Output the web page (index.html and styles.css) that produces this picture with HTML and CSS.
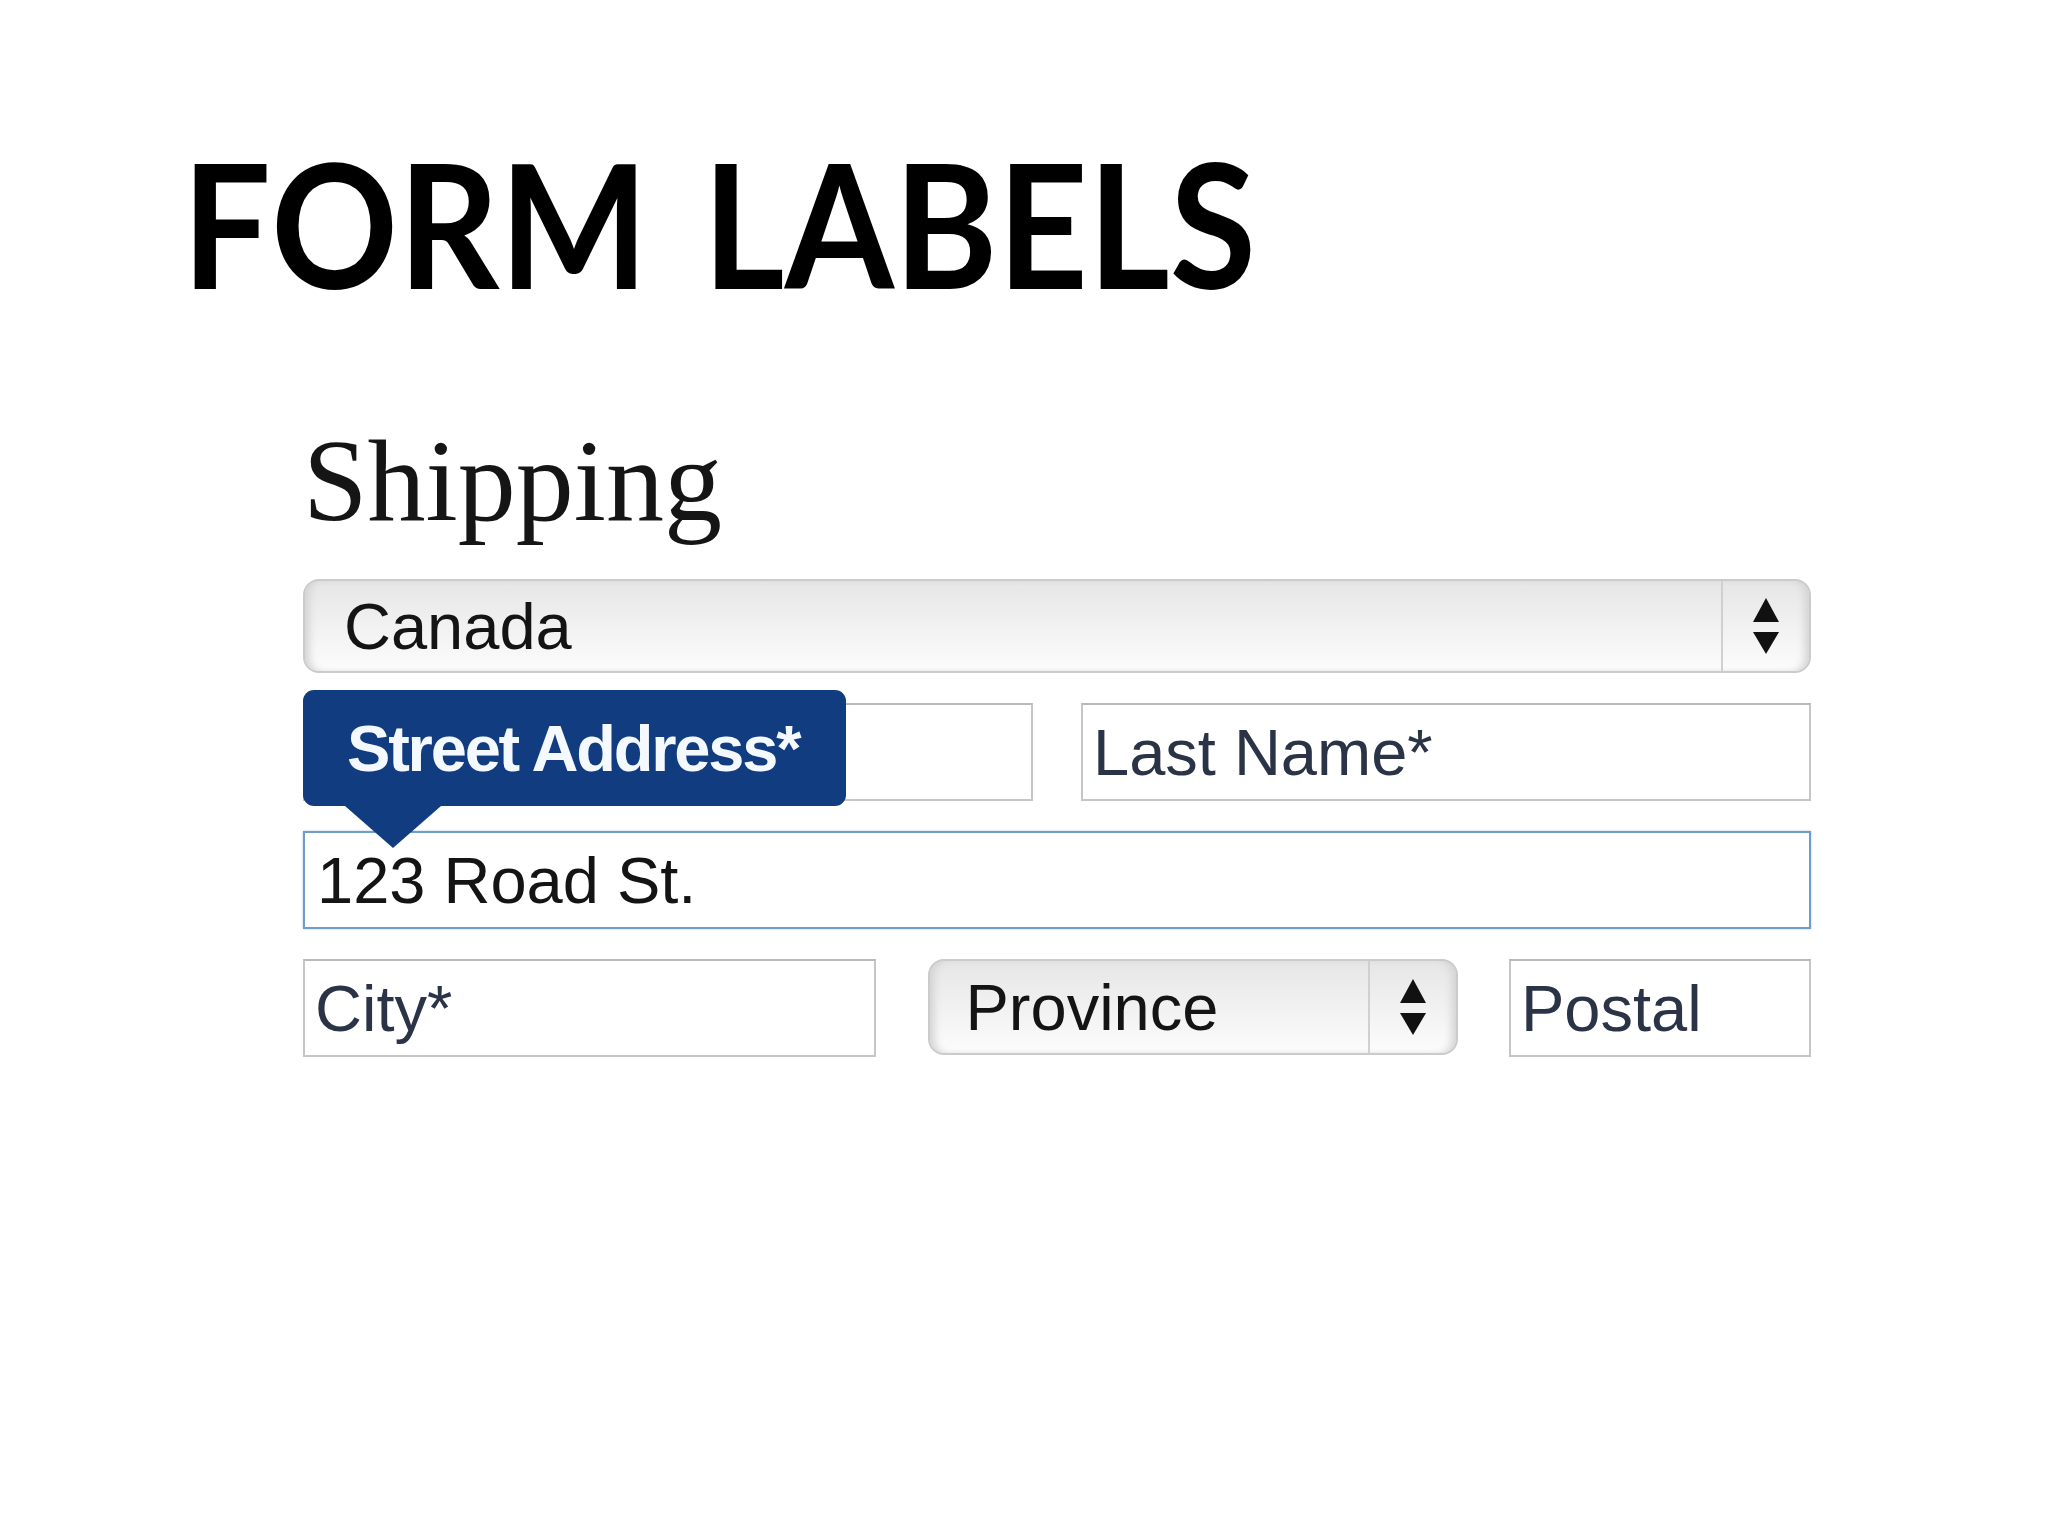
FILE: index.html
```html
<!DOCTYPE html>
<html lang="en">
<head>
    <meta charset="UTF-8">
    <meta name="viewport" content="width=device-width, initial-scale=1.0">
    <title>Form Labels</title>
    <link rel="stylesheet" href="styles.css">
</head>
<body>

    <div class="slide">
        <h1 class="slide-title">FORM LABELS</h1>

        <h2 class="shipping-title">Shipping</h2>

        <form class="shipping-form" id="shippingForm">
            <div class="select">
                <span class="select-value">Canada</span>
                <span class="select-arrows">
                    <svg width="26" height="56" viewBox="0 0 26 56">
                        <polygon points="13,0 26,24 0,24" />
                        <polygon points="0,34 26,34 13,56" />
                    </svg>
                </span>
            </div>

            <div class="row">
                <div class="field-wrap">
                    <input type="text" class="field field-half" name="firstName">
                    <div class="tip">Street Address*</div>
                </div>
                <input type="text" class="field field-half" name="lastName" placeholder="Last Name*">
            </div>

            <input type="text" class="field field-focus" name="street" value="123 Road St.">

            <div class="row">
                <input type="text" class="field field-city" name="city" placeholder="City*">
                <div class="select select-province">
                    <span class="select-value">Province</span>
                    <span class="select-arrows">
                        <svg width="26" height="56" viewBox="0 0 26 56">
                            <polygon points="13,0 26,24 0,24" />
                            <polygon points="0,34 26,34 13,56" />
                        </svg>
                    </span>
                </div>
                <input type="text" class="field field-postal" name="postal" placeholder="Postal">
            </div>
        </form>
    </div>

</body>
</html>
```

FILE: styles.css
```css
* {
    box-sizing: border-box;
}
body {
    margin: 0;
    background-color: #fff;
    font-family: "Liberation Sans", Arial, sans-serif;
}
.slide {
    width: 2048px;
    height: 1536px;
    padding: 137px 0 0 182px;
}
.slide-title {
    margin: 0;
    font-family: "Lato", "Open Sans", sans-serif;
    font-weight: 700;
    font-size: 172px;
    line-height: 1;
    letter-spacing: 0;
    word-spacing: 18px;
    font-kerning: none;
    color: #000;
    transform: scaleX(0.915);
    transform-origin: left center;
}
.shipping-title {
    margin: 114px 0 0 121px;
    font-family: "Liberation Serif", "Times New Roman", serif;
    font-weight: normal;
    font-size: 116px;
    line-height: 1;
    color: #151515;
}
.shipping-form {
    margin: 40px 0 0 121px;
    width: 1508px;
    display: flex;
    flex-direction: column;
    gap: 30px;
}
.row {
    display: flex;
    justify-content: space-between;
}

/* fake mac style select */
.select {
    display: flex;
    align-items: center;
    height: 94px;
    border: 2px solid #cbcbcb;
    border-radius: 16px;
    background: linear-gradient(#e6e6e6, #f0f0f0 45%, #fcfcfc);
    box-shadow: inset 8px 0 8px -4px #d2d2d2, inset -8px 0 8px -4px #d2d2d2;
}
.select-value {
    flex: 1;
    padding-left: 39px;
    font-size: 65px;
    color: #141414;
}
.select-arrows {
    width: 88px;
    height: 100%;
    display: flex;
    align-items: center;
    justify-content: center;
    border-left: 2px solid #d0d0d0;
}
.select-arrows svg {
    fill: #111;
}
.select-province {
    width: 530px;
    height: 96px;
}
.select-province .select-value {
    padding-left: 36px;
}

.field {
    height: 98px;
    width: 100%;
    padding: 0 10px;
    border: 2px solid #c6c6c6;
    border-top-color: #b9b9b9;
    border-radius: 0;
    background: #fff;
    font-family: "Liberation Sans", Arial, sans-serif;
    font-size: 65px;
    color: #141414;
    outline: none;
}
.field::placeholder {
    color: #2b3446;
    opacity: 1;
}
.field-half {
    width: 730px;
}
.field-focus {
    padding-left: 12px;
    border: 2px solid #6f9cc8;
    box-shadow: 0 0 2px #a9c6e4;
}
.field-city {
    width: 573px;
}
.field-postal {
    width: 302px;
}

/* floating label over the first name box */
.field-wrap {
    position: relative;
}
.tip {
    position: absolute;
    left: 0;
    top: -13px;
    width: 543px;
    height: 116px;
    padding: 2px 0 0 44px;
    background-color: #123c80;
    border-radius: 11px;
    color: #f4f8ff;
    font-weight: bold;
    font-size: 65px;
    line-height: 114px;
    letter-spacing: -2.2px;
}
.tip::after {
    content: "";
    position: absolute;
    left: 42px;
    top: 116px;
    border-left: 48px solid transparent;
    border-right: 48px solid transparent;
    border-top: 42px solid #123c80;
}
```
